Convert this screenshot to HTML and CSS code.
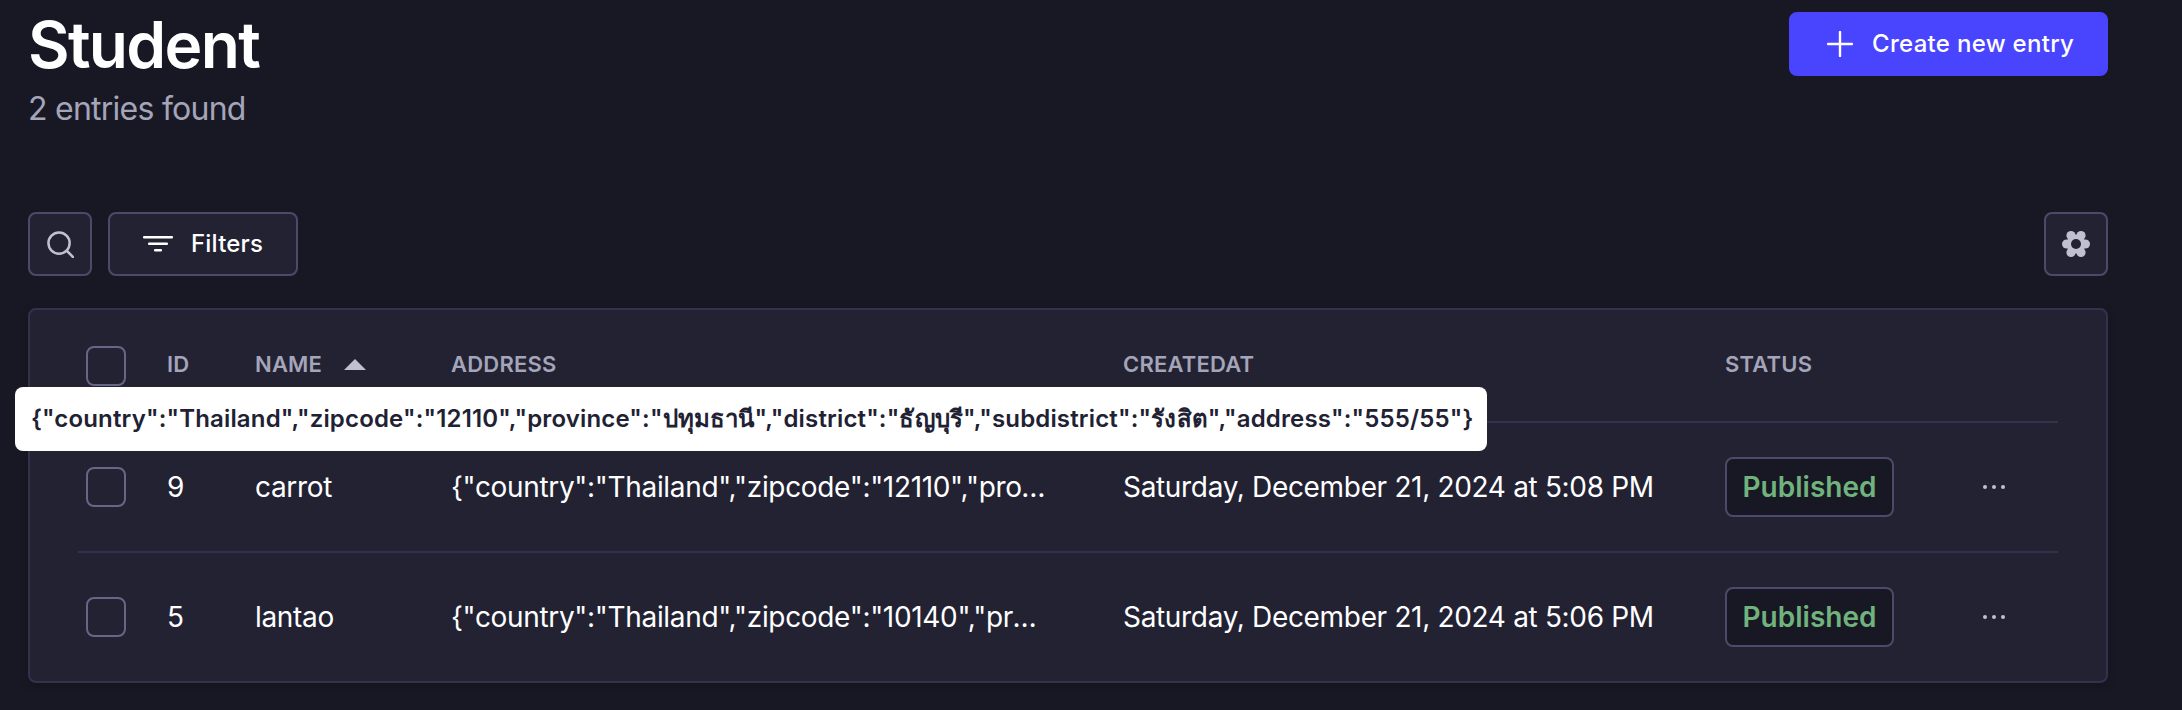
FILE: index.html
```html
<!DOCTYPE html>
<html lang="en">
<head>
<meta charset="utf-8">
<title>Student</title>
<link rel="stylesheet" href="styles.css">
</head>
<body>
<main class="page">
  <header class="head">
    <div class="head-text">
      <h1 class="title">Student</h1>
      <p class="subtitle">2 entries found</p>
    </div>
    <button class="btn-primary">
      <svg class="ico-plus" viewBox="0 0 26 26" fill="none" stroke="#fff" stroke-width="2.4" stroke-linecap="round"><path d="M13 1v24M1 13h24"/></svg>
      <span class="btn-label">Create new entry</span>
    </button>
  </header>
  <div class="toolbar">
    <div class="tools-left">
      <button class="btn-square">
        <svg class="ico-search" viewBox="0 0 28 28" fill="none" stroke="#c0c0cf" stroke-width="2.6" stroke-linecap="round"><circle cx="12.5" cy="12.5" r="11"/><path d="M21 21l6 6"/></svg>
      </button>
      <button class="btn-filter">
        <svg class="ico-filter" viewBox="0 0 30 16" fill="#fff"><rect x="0" y="0" width="30" height="2.6" rx="1"/><rect x="5" y="6.5" width="20" height="2.6" rx="1"/><rect x="11" y="13" width="8" height="2.6" rx="1"/></svg>
        <span class="btn-label">Filters</span>
      </button>
    </div>
    <button class="btn-square">
      <svg class="ico-gear" viewBox="0 0 28 26" fill="#c0c0cf"><circle cx="14" cy="13" r="9.5"/><circle cx="4.6" cy="13" r="4.6"/><circle cx="23.4" cy="13" r="4.6"/><circle cx="9" cy="4.6" r="4.6"/><circle cx="19" cy="4.6" r="4.6"/><circle cx="9" cy="21.4" r="4.6"/><circle cx="19" cy="21.4" r="4.6"/><circle class="gear-hole" cx="14" cy="13" r="5"/></svg>
    </button>
  </div>
  <section class="card">
    <table class="table">
      <colgroup>
        <col class="c-check"><col class="c-id"><col class="c-name"><col class="c-address"><col class="c-date"><col class="c-status"><col>
      </colgroup>
      <thead>
        <tr class="row-head">
          <th class="th-check"><span class="check"></span></th>
          <th>ID</th>
          <th>NAME <svg class="ico-sort" viewBox="0 0 22 11" fill="#c0c0cf"><path d="M11 0l11 11H0z"/></svg></th>
          <th>ADDRESS</th>
          <th>CREATEDAT</th>
          <th>STATUS</th>
          <th></th>
        </tr>
      </thead>
      <tbody>
        <tr class="row">
          <td><span class="check"></span></td>
          <td>9</td>
          <td>carrot</td>
          <td><span class="clip">{"country":"Thailand","zipcode":"12110","province":"ปทุมธานี","district":"ธัญบุรี","subdistrict":"รังสิต","address":"555/55"}</span></td>
          <td>Saturday, December 21, 2024 at 5:08 PM</td>
          <td><span class="badge">Published</span></td>
          <td><svg class="ico-dots" viewBox="0 0 22 4" fill="#c0c0cf"><circle cx="2" cy="2" r="2"/><circle cx="11" cy="2" r="2"/><circle cx="20" cy="2" r="2"/></svg></td>
        </tr>
        <tr class="row">
          <td><span class="check"></span></td>
          <td>5</td>
          <td>lantao</td>
          <td><span class="clip">{"country":"Thailand","zipcode":"10140","province":"ปทุมธานี","address":"555/55"}</span></td>
          <td>Saturday, December 21, 2024 at 5:06 PM</td>
          <td><span class="badge">Published</span></td>
          <td><svg class="ico-dots" viewBox="0 0 22 4" fill="#c0c0cf"><circle cx="2" cy="2" r="2"/><circle cx="11" cy="2" r="2"/><circle cx="20" cy="2" r="2"/></svg></td>
        </tr>
      </tbody>
    </table>
  </section>
</main>
<div class="tooltip">{"country":"Thailand","zipcode":"12110","province":"ปทุมธานี","district":"ธัญบุรี","subdistrict":"รังสิต","address":"555/55"}</div>
</body>
</html>
```
FILE: styles.css
```css
* { box-sizing: border-box; }
html, body { margin: 0; height: 100%; }
body {
  background: #181824;
  color: #fff;
  font-family: Inter, "Noto Sans", "DejaVu Sans", sans-serif;
  overflow: hidden;
}
.page { padding: 0 74px 0 28px; }
.head { display: flex; justify-content: space-between; align-items: flex-start; height: 212px; padding-top: 12px; }
.head-text { margin-top: -11px; }
.title { margin: 0; font-size: 64px; line-height: 88px; font-weight: 600; letter-spacing: -1.7px; }
.subtitle { margin: -2px 0 0; font-size: 32px; line-height: 44px; color: #a5a5ba; font-weight: 400; letter-spacing: -.75px; }
button { font-family: inherit; cursor: pointer; }
.btn-primary {
  display: flex; align-items: center; gap: 19px;
  width: 319px; height: 64px; padding: 0 0 0 36px;
  background: #4945ff; border: 2px solid #4945ff; border-radius: 8px;
  color: #fff; font-size: 24px; font-weight: 500; letter-spacing: .3px; white-space: nowrap;
}
.btn-label { margin-top: -2px; }
.ico-plus { width: 26px; height: 26px; flex: none; }
.toolbar { display: flex; justify-content: space-between; height: 64px; margin-bottom: 32px; }
.tools-left { display: flex; gap: 16px; }
.btn-square {
  display: flex; align-items: center; justify-content: center;
  width: 64px; height: 64px; padding: 0;
  background: #222233; border: 2px solid #4a4a6a; border-radius: 8px;
}
.btn-filter {
  display: flex; align-items: center; gap: 18px;
  width: 190px; height: 64px; padding: 0 0 0 33px;
  background: #222233; border: 2px solid #4a4a6a; border-radius: 8px;
  color: #fff; font-size: 24px; font-weight: 500; letter-spacing: .2px;
}
.ico-search { width: 27px; height: 27px; }
.ico-filter { width: 30px; height: 16px; flex: none; }
.ico-gear { width: 28px; height: 26px; }
.gear-hole { fill: #222233; }
.card {
  height: 375px; padding: 0 48px;
  background: #222233; border: 2px solid #32324d; border-radius: 8px;
  box-shadow: 0 2px 8px rgba(3, 3, 5, .2);
}
.table { width: 100%; table-layout: fixed; border-collapse: separate; border-spacing: 0; }
.c-check { width: 89px; }
.c-id { width: 88px; }
.c-name { width: 196px; }
.c-address { width: 672px; }
.c-date { width: 602px; }
.c-status { width: 258px; }
.row-head th {
  height: 111px; padding: 0 0 3px; text-align: left;
  font-size: 22px; font-weight: 600; color: #a5a5ba; letter-spacing: .2px;
}
.row-head .th-check { padding: 1px 0 0; }
.row td {
  height: 130px; padding: 0; border-top: 2px solid #32324d;
  font-size: 28px; color: #fff; white-space: nowrap; overflow: hidden; letter-spacing: -.33px;
}
.check {
  display: block; width: 40px; height: 40px; margin-left: 8px;
  border: 2px solid #666687; border-radius: 8px; background: #222233;
}
.ico-sort { width: 22px; height: 11px; margin-left: 16px; vertical-align: 2px; }
.clip { display: block; max-width: 597px; overflow: hidden; text-overflow: ellipsis; white-space: nowrap; }
.badge {
  display: inline-block; width: 169px; height: 60px; line-height: 56px; text-align: center;
  background: #181824; border: 2px solid #4a4a6a; border-radius: 8px;
  color: #70b37d; font-size: 28px; font-weight: 600; letter-spacing: 0;
}
.ico-dots { display: block; width: 22px; height: 4px; }
.tooltip {
  position: absolute; left: 15px; top: 387px;
  width: 1472px; height: 64px; padding-left: 16px; line-height: 64px;
  background: #fff; border-radius: 8px;
  color: #212134; font-size: 24px; font-weight: 600; letter-spacing: .16px; white-space: nowrap;
}
```
